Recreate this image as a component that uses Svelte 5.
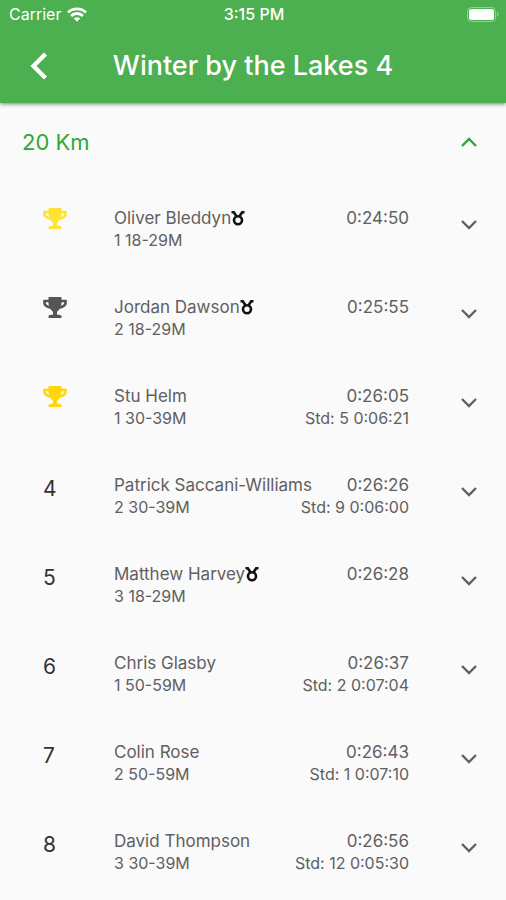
<script>
  const runners = [
    { rank: 1, trophy: '#ffe234', name: 'Oliver Bleddyn', medal: true, group: '1 18-29M', time: '0:24:50' },
    { rank: 2, trophy: '#555555', name: 'Jordan Dawson', medal: true, group: '2 18-29M', time: '0:25:55' },
    { rank: 3, trophy: '#ffd60a', name: 'Stu Helm', group: '1 30-39M', time: '0:26:05', std: 'Std: 5 0:06:21' },
    { rank: 4, name: 'Patrick Saccani-Williams', group: '2 30-39M', time: '0:26:26', std: 'Std: 9 0:06:00' },
    { rank: 5, name: 'Matthew Harvey', medal: true, group: '3 18-29M', time: '0:26:28' },
    { rank: 6, name: 'Chris Glasby', group: '1 50-59M', time: '0:26:37', std: 'Std: 2 0:07:04' },
    { rank: 7, name: 'Colin Rose', group: '2 50-59M', time: '0:26:43', std: 'Std: 1 0:07:10' },
    { rank: 8, name: 'David Thompson', group: '3 30-39M', time: '0:26:56', std: 'Std: 12 0:05:30' }
  ];
</script>

<div class="screen">
  <header>
    <div class="status">
      <div class="carrier">
        <span>Carrier</span>
        <svg width="20" height="15" viewBox="0 0 20 15" aria-hidden="true">
          <g fill="none" stroke="#fff" stroke-width="2.8">
            <path d="M1 5.4C6 .7 14 .7 19 5.4" />
            <path d="M4.1 8.900c3.300-3.200 8.500-3.200 11.800 0" />
          </g>
          <path fill="#fff" d="M10 14.800l-3.200-3.300c1.800-1.700 4.600-1.700 6.400 0z" />
        </svg>
      </div>
      <div class="clock">3:15 PM</div>
      <svg class="battery" width="32" height="15" viewBox="0 0 32 15" aria-hidden="true">
        <rect x=".5" y=".5" width="28" height="14" rx="4" fill="none" stroke="#fff" stroke-opacity=".4" />
        <rect x="2" y="2" width="25" height="11" rx="2.5" fill="#fff" />
        <path d="M30 5c2 1 2 4 0 5z" fill="#fff" fill-opacity=".4" />
      </svg>
    </div>
    <div class="bar">
      <button class="back" aria-label="Back">
        <svg width="18" height="28" viewBox="0 0 18 28" aria-hidden="true">
          <path d="M15.500 2L3.500 14l12 12" fill="none" stroke="#fff" stroke-width="4.4" />
        </svg>
      </button>
      <h1>Winter by the Lakes 4</h1>
    </div>
  </header>

  <main>
    <button class="section" aria-expanded="true">
      <span>20 Km</span>
      <svg class="chevron" viewBox="0 0 16 10" aria-hidden="true"><path d="M1 9l7-7 7 7" /></svg>
    </button>
    {#each runners as r (r.rank)}
      <button class="row" aria-expanded="false">
        <span class="rank">
          {#if r.trophy}
            <svg width="24" height="21" viewBox="0 0 576 512" role="img" aria-label={`Place ${r.rank}`}>
              <path fill={r.trophy} d="M552 64H448V24c0-13.300-10.700-24-24-24H152c-13.300 0-24 10.700-24 24v40H24C10.700 64 0 74.700 0 88v56c0 35.700 22.500 72.400 61.900 100.700 31.500 22.700 69.800 37.100 110 41.700C203.300 338.500 240 360 240 360v72h-48c-35.300 0-64 20.700-64 56v12c0 6.600 5.400 12 12 12h296c6.600 0 12-5.400 12-12v-12c0-35.300-28.700-56-64-56h-48v-72s36.700-21.500 68.100-73.600c40.300-4.600 78.600-19 110-41.700 39.300-28.300 61.900-65 61.900-100.700V88c0-13.300-10.700-24-24-24zM99.300 192.800C74.900 175.200 64 155.600 64 144v-16h64.200c1 32.600 5.800 61.200 12.800 86.200-15.100-5.200-29.200-12.400-41.700-21.400zM512 144c0 16.100-17.700 36.100-35.300 48.800-12.500 9-26.700 16.200-41.800 21.400 7-25 11.800-53.600 12.800-86.200H512v16z" />
            </svg>
          {:else}
            {r.rank}
          {/if}
        </span>
        <span class="details">
          <span class="line main">
            <span class="name">{r.name}{#if r.medal}<svg class="medal" width="14" height="16" viewBox="0 0 14 16" role="img" aria-label="Medal"><path d="M.5 2.200h2.300L5.500 6.200M13.500 2.200h-2.300L8.500 6.200" /><circle cx="7" cy="10.300" r="4" /></svg>{/if}</span>
            <span>{r.time}</span>
          </span>
          <span class="line sub">
            <span>{r.group}</span>
            {#if r.std}<span>{r.std}</span>{/if}
          </span>
        </span>
        <svg class="chevron" viewBox="0 0 16 10" aria-hidden="true"><path d="M1 1l7 7 7-7" /></svg>
      </button>
    {/each}
  </main>
</div>

<style>
  :global(body) {
    margin: 0;
    background: #fafafa;
  }
  .screen {
    font-family: Inter, 'Liberation Sans', sans-serif;
    color: #606060;
    background: #fafafa;
  }
  header {
    background: #4caf50;
    color: #fff;
    box-shadow: 0 1px 4px rgba(0, 0, 0, 0.5);
  }
  .status {
    display: grid;
    grid-template-columns: 1fr auto 1fr;
    align-items: center;
    height: 28px;
    padding: 0 7px 0 9px;
    font-size: 16px;
  }
  .carrier {
    display: flex;
    align-items: center;
    gap: 6px;
  }
  .clock {
    font-weight: 500;
  }
  .battery {
    justify-self: end;
  }
  .bar {
    display: grid;
    grid-template-columns: 56px 1fr 56px;
    align-items: center;
    height: 75px;
  }
  button {
    border: 0;
    margin: 0;
    padding: 0;
    background: none;
    font: inherit;
    color: inherit;
    text-align: left;
    cursor: pointer;
  }
  .back {
    display: flex;
    justify-content: flex-end;
    padding-right: 8px;
  }
  h1 {
    margin: 0;
    font-size: 27px;
    line-height: 32px;
    font-weight: 500;
    text-align: center;
  }
  .section {
    display: flex;
    align-items: center;
    justify-content: space-between;
    width: 100%;
    height: 77px;
    padding: 0 29px 0 22px;
    font-size: 22px;
    color: #2fa836;
  }
  .row {
    display: flex;
    align-items: center;
    width: 100%;
    height: 89px;
    padding: 0 29px 0 43px;
  }
  .rank {
    flex: none;
    width: 71px;
    height: 34px;
    font-size: 21px;
    line-height: 28px;
    color: #333;
  }
  .rank svg {
    display: block;
  }
  .details {
    flex: 1;
    display: flex;
    flex-direction: column;
    margin-right: 52px;
    padding-top: 8px;
    white-space: nowrap;
  }
  .line {
    display: flex;
    justify-content: space-between;
    line-height: 22px;
  }
  .main {
    font-size: 17px;
  }
  .sub {
    font-size: 16px;
  }
  .name {
    display: flex;
    align-items: center;
  }
  .chevron {
    flex: none;
    width: 16px;
    height: 10px;
    fill: none;
    stroke: currentColor;
    stroke-width: 2.4;
  }
  .medal {
    fill: none;
    stroke: #111;
    stroke-width: 2.6;
  }
</style>
